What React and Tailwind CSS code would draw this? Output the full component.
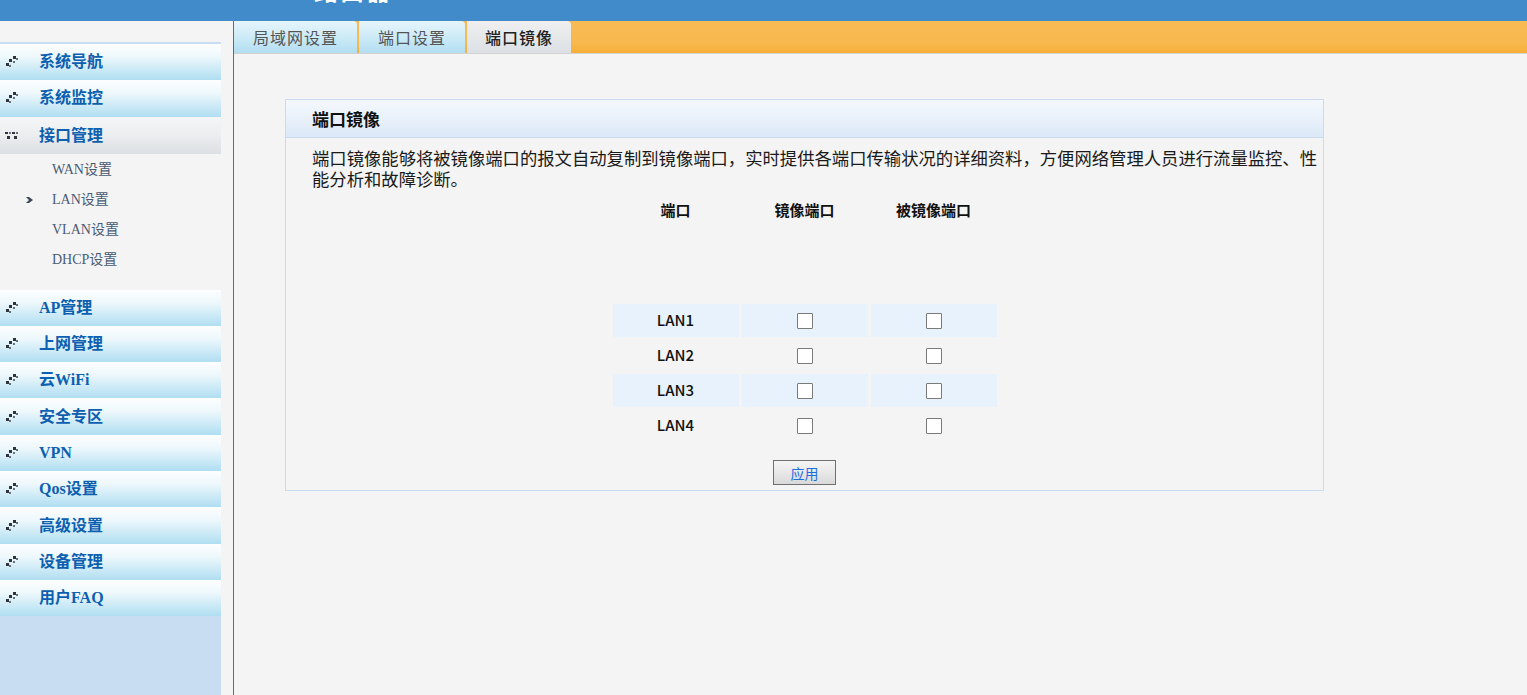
import { useState } from 'react';

const menuTop = ['系统导航', '系统监控'];
const menuBottom = ['AP管理', '上网管理', '云WiFi', '安全专区', 'VPN', 'Qos设置', '高级设置', '设备管理', '用户FAQ'];
const subMenu = ['WAN设置', 'LAN设置', 'VLAN设置', 'DHCP设置'];
const tabs = [
  { label: '局域网设置', w: 'w-[123px]' },
  { label: '端口设置', w: 'w-[106px]' },
  { label: '端口镜像', w: 'w-[104px]', active: true },
];
const ports = ['LAN1', 'LAN2', 'LAN3', 'LAN4'];

const DotsIcon = () => (
  <svg width="14" height="12" viewBox="0 0 14 12" className="shrink-0">
    <rect x="8" y="0" width="3" height="3" fill="#2f343c" />
    <rect x="11" y="2" width="2" height="2" fill="#6b717a" />
    <rect x="4" y="3" width="3" height="3" fill="#2f343c" />
    <rect x="8" y="5" width="2" height="2" fill="#6b717a" />
    <rect x="1" y="7" width="3" height="3" fill="#2f343c" />
    <rect x="4" y="9" width="2" height="2" fill="#6b717a" />
  </svg>
);

const OpenIcon = () => (
  <svg width="14" height="12" viewBox="0 0 14 12" className="shrink-0">
    <rect x="0" y="2" width="3" height="2" fill="#2f343c" />
    <rect x="4" y="2" width="2" height="2" fill="#6b717a" />
    <rect x="7" y="2" width="3" height="2" fill="#2f343c" />
    <rect x="11" y="2" width="2" height="2" fill="#6b717a" />
    <rect x="2" y="6" width="3" height="3" fill="#2f343c" />
    <rect x="9" y="6" width="3" height="3" fill="#2f343c" />
  </svg>
);

const MenuItem = ({ label }) => (
  <div className="h-[36.3px] flex items-center pl-[5px] bg-[linear-gradient(to_bottom,#fdfeff_0%,#eef8fc_35%,#b0def2_100%)]">
    <DotsIcon />
    <span className="ml-[20px] text-[16px] font-bold text-[#0d5fb0]">{label}</span>
  </div>
);

const CheckBox = ({ checked, onClick }) => (
  <span
    onClick={onClick}
    className="w-[16px] h-[16px] border border-[#7a7a7a] bg-white rounded-[1px] flex items-center justify-center text-[11px] leading-none cursor-pointer"
  >
    {checked ? '✓' : ''}
  </span>
);

export default function App() {
  const [mirror, setMirror] = useState({});

  const toggle = (key) => setMirror(prev => ({ ...prev, [key]: !prev[key] }));

  return (
    <div className="h-[695px] overflow-hidden bg-[#f4f4f4] flex flex-col font-['Noto_Sans_CJK_SC',sans-serif]">
      <div className="h-[21px] shrink-0 bg-[#418bca] overflow-hidden pl-[314px]">
        <div className="-mt-[22px] text-[24px] leading-[24px] font-bold text-white tracking-[2px]">路由器</div>
      </div>

      <div className="flex flex-1 min-h-0">
        {/* sidebar */}
        <div className="w-[221px] shrink-0 flex flex-col font-['Liberation_Serif','Noto_Sans_CJK_SC',serif]">
          <div className="h-[21px] shrink-0 bg-[#f4f4f4]" />
          <div className="h-[2px] shrink-0 bg-[#c9def2]" />
          {menuTop.map(m => <MenuItem key={m} label={m} />)}
          <div className="h-[1px] shrink-0" />
          <div className="h-[36px] shrink-0 flex items-center pl-[5px] bg-[linear-gradient(to_bottom,#f5f6f7_0%,#eceef0_45%,#dcdfe3_100%)]">
            <OpenIcon />
            <span className="ml-[20px] text-[16px] font-bold text-[#0d5fb0]">接口管理</span>
          </div>
          <div className="bg-[#f4f4f4] pt-[1px] pb-[15px] shrink-0">
            {subMenu.map(s => (
              <div key={s} className="h-[30px] flex items-center">
                <span className="w-[52px] flex justify-end pr-[17px]">
                  {s === 'LAN设置' && (
                    <svg width="9" height="6" viewBox="0 0 9 6">
                      <path d="M0 0h3l4 3-4 3H0l3-3z" fill="#3d4656" />
                    </svg>
                  )}
                </span>
                <span className="text-[14px] text-[#4a5b74]">{s}</span>
              </div>
            ))}
          </div>
          {menuBottom.map(m => <MenuItem key={m} label={m} />)}
          <div className="flex-1 bg-[#c8ddf1]" />
        </div>

        <div className="w-[12px] shrink-0 bg-[#f4f4f4]" />

        {/* main */}
        <div className="flex-1 border-l border-[#3b73c4] flex flex-col">
          <div className="h-[33px] shrink-0 flex gap-[2px] bg-[linear-gradient(to_bottom,#f8bb55_0%,#f8b84e_70%,#f6ae36_100%)] border-b border-[#d2d2d2]">
            {tabs.map(t => (
              <div
                key={t.label}
                className={`${t.w} h-[32px] rounded-tr-[4px] flex items-center justify-center text-[16px] tracking-[1px] ${
                  t.active
                    ? 'bg-[linear-gradient(to_bottom,#efefef_0%,#e6e8ea_50%,#dce0e5_100%)] text-[#222] font-medium'
                    : 'bg-[linear-gradient(to_bottom,#e6f5fc_0%,#cdebf7_50%,#b2ddf1_100%)] text-[#555]'
                }`}
              >
                {t.label}
              </div>
            ))}
          </div>

          <div className="pl-[51px] pt-[45px]">
            <div className="w-[1039px] border border-[#c9dcef] bg-[#f4f4f4]">
              <div className="h-[38px] flex items-center pl-[26px] bg-[linear-gradient(to_bottom,#f4f8fd_0%,#e9f1fb_50%,#dce8f7_100%)] border-b border-[#c9dcef]">
                <span className="text-[17px] font-bold text-[#111]">端口镜像</span>
              </div>

              <div className="pl-[26px] pr-[4px] pt-[9px] pb-[5px]">
                <p className="text-[17.33px] leading-[21px] text-[#1a1a1a]">
                  端口镜像能够将被镜像端口的报文自动复制到镜像端口，实时提供各端口传输状况的详细资料，方便网络管理人员进行流量监控、性能分析和故障诊断。
                </p>

                <div className="mt-[9px] flex justify-center pr-[22px]">
                  <div className="grid grid-cols-[126px_126px_126px] gap-x-[3px] gap-y-[2px]">
                    {['端口', '镜像端口', '被镜像端口'].map(h => (
                      <div key={h} className="h-[24px] flex items-center justify-center text-[15px] font-bold text-[#111]">{h}</div>
                    ))}
                    <div className="col-span-3 h-[78px]" />
                    {ports.map((p, i) => {
                      const bg = i % 2 === 0 ? 'bg-[#e8f2fc]' : '';
                      return [
                        <div key={p + 'n'} className={`h-[33px] flex items-center justify-center text-[15px] font-medium text-[#111] ${bg}`}>{p}</div>,
                        <div key={p + 'm'} className={`h-[33px] flex items-center justify-center ${bg}`}>
                          <CheckBox checked={mirror[p + 'm']} onClick={() => toggle(p + 'm')} />
                        </div>,
                        <div key={p + 's'} className={`h-[33px] flex items-center justify-center ${bg}`}>
                          <CheckBox checked={mirror[p + 's']} onClick={() => toggle(p + 's')} />
                        </div>,
                      ];
                    })}
                  </div>
                </div>

                <div className="mt-[18px] flex justify-center pr-[22px]">
                  <button className="w-[63px] h-[25px] border border-[#707070] bg-[linear-gradient(to_bottom,#f5f5f5_0%,#e8e8e8_50%,#d9d9d9_100%)] text-[14px] text-[#1a6ee0] leading-none">
                    应用
                  </button>
                </div>
              </div>
            </div>
          </div>
        </div>
      </div>
    </div>
  );
}
